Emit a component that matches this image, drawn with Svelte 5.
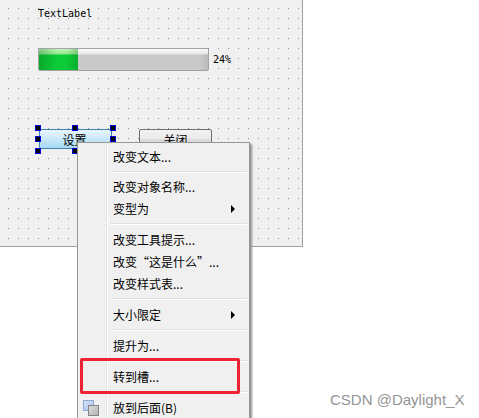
<script>
  const handles = [[35,125],[72,125],[110,125],[35,136],[110,136],[35,148],[72,148]];
  const groups = [
    [{t:'改变文本...'}],
    [{t:'改变对象名称...'},{t:'变型为',sub:true}],
    [{t:'改变工具提示...'},{t:'改变“这是什么”...'},{t:'改变样式表...'}],
    [{t:'大小限定',sub:true}],
    [{t:'提升为...'}],
    [{t:'转到槽...'}],
    [{t:'放到后面(B)',icon:true}]
  ];
</script>

<div class="page">
  <div class="form">
    <svg class="dots" width="302" height="246" aria-hidden="true">
      <defs><pattern id="d" width="10" height="10" patternUnits="userSpaceOnUse"><rect x="8" y="8" width="1" height="1" fill="#8a8a8a"/></pattern></defs>
      <rect width="302" height="246" fill="url(#d)"/>
    </svg>
    <div class="label">TextLabel</div>
    <div class="bar"><div class="chunk"></div><div class="shade"></div></div>
    <div class="pct">24%</div>
    <div class="btn sel">设置</div>
    <div class="btn close">关闭</div>
    {#each handles as h}
      <div class="handle" style="left:{h[0]}px;top:{h[1]}px"></div>
    {/each}
  </div>

  <div class="menu">
    <div class="gutter"></div>
    {#each groups as g, i}
      {#if i > 0}<div class="sep" class:tight={i === 1}></div>{/if}
      {#each g as item}
        <div class="item">
          {#if item.icon}
            <svg class="ico" width="16" height="16" viewBox="0 0 16 16" aria-hidden="true">
              <defs>
                <linearGradient id="bl" x1="0" y1="0" x2="1" y2="1"><stop offset="0" stop-color="#d5e3f8"/><stop offset="1" stop-color="#a9c4ec"/></linearGradient>
                <linearGradient id="gr" x1="0" y1="0" x2="1" y2="1"><stop offset="0" stop-color="#dcdcdc"/><stop offset="1" stop-color="#b4b4b4"/></linearGradient>
              </defs>
              <rect x="0.5" y="0.5" width="10" height="10" fill="url(#bl)" stroke="#8fa9d4"/>
              <rect x="5.5" y="5.5" width="10" height="10" fill="url(#gr)" stroke="#858585"/>
            </svg>
          {/if}
          <span>{item.t}</span>
          {#if item.sub}<i class="arrow"></i>{/if}
        </div>
      {/each}
    {/each}
  </div>

  <div class="red"></div>
  <div class="mark">CSDN @Daylight_X</div>
</div>

<style>
  :global(body) { margin: 0; background: #fff; }
  .page { position: relative; width: 479px; height: 418px; overflow: hidden; font-family: "Noto Sans CJK SC", sans-serif; }
  .form { position: absolute; left: 0; top: 0; width: 302px; height: 246px; background: #f0f0f0; border-right: 1px solid #a0a0a0; border-bottom: 1px solid #a0a0a0; font-family: "DejaVu Sans Mono", "Noto Sans CJK SC", monospace; font-size: 10px; color: #000; }
  .dots { position: absolute; left: 0; top: 0; }
  .label { position: absolute; left: 38px; top: 8px; line-height: 12px; }
  .bar { position: absolute; left: 38px; top: 48px; width: 171px; height: 23px; border: 1px solid #a3a3a3; border-radius: 2px; box-sizing: border-box; background: linear-gradient(#fbfbfb 0, #e6e6e6 5px, #c9c9c9 6px, #c9c9c9 100%); overflow: hidden; }
  .chunk { width: 39px; height: 100%; background: linear-gradient(90deg, rgba(0,90,20,.3), rgba(0,90,20,0) 45%, rgba(0,90,20,0) 70%, rgba(0,90,20,.25)), linear-gradient(#c2f5b8 0, #8fe88c 5px, #0ccb36 6px, #0ccb36 100%); }
  .shade { position: absolute; right: 0; top: 5px; bottom: 0; width: 8px; background: linear-gradient(90deg, rgba(0,0,0,0), rgba(0,0,0,.07)); }
  .pct { position: absolute; left: 213px; top: 54px; line-height: 12px; }
  .btn { position: absolute; box-sizing: border-box; height: 20px; width: 73px; text-align: center; border-radius: 2px; font-size: 12px; line-height: 20px; font-family: "Noto Sans CJK SC", sans-serif; }
  .sel { left: 39px; top: 129px; padding-right: 2px; border: 1px solid #3c7fb1; background: linear-gradient(#eaf6fd, #a7d9f5); }
  .close { left: 139px; top: 129px; border: 1px solid #707070; background: linear-gradient(#f2f2f2 0, #ebebeb 50%, #dddddd 50%, #cfcfcf); }
  .handle { position: absolute; width: 4px; height: 4px; background: #000; border: 1px solid #0000e0; }
  .menu { position: absolute; left: 77px; top: 142px; width: 173px; box-sizing: border-box; height: 290px; background: #f0f0f0; border: 1px solid #979797; box-shadow: 2px 2px 2px #8f8f8f; padding: 3px 2px 0; font-size: 12px; color: #000; }
  .gutter { position: absolute; left: 28px; top: 1px; bottom: 0; width: 1px; background: #e2e3e3; border-right: 1px solid #fff; }
  .item { position: relative; height: 22px; line-height: 22px; padding-left: 33px; white-space: nowrap; }
  .sep { height: 1px; margin: 3px 0 4px 30px; background: #e0e0e0; border-bottom: 1px solid #fff; }
  .sep.tight { margin-bottom: 3px; }
  .arrow { position: absolute; left: 151px; top: 7px; width: 0; height: 0; border-left: 4px solid #000; border-top: 4px solid transparent; border-bottom: 4px solid transparent; }
  .ico { position: absolute; left: 3px; top: 3px; }
  .red { position: absolute; left: 80px; top: 358px; width: 160px; height: 36px; box-sizing: border-box; border: 3px solid #ee2233; border-radius: 2px; }
  .mark { position: absolute; left: 330px; top: 390px; font-family: "Liberation Sans", sans-serif; font-size: 15px; line-height: 20px; color: #959595; }
</style>
